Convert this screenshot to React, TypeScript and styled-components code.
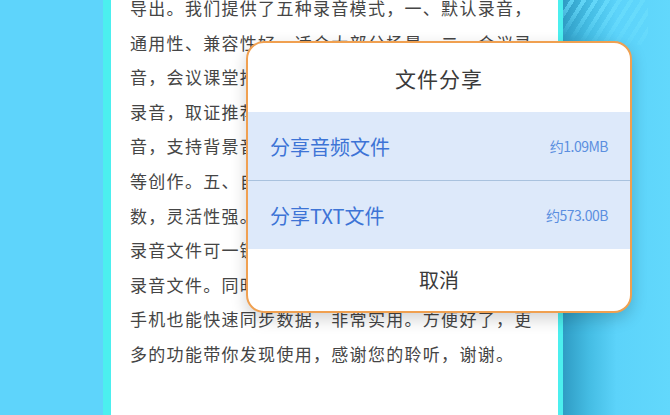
import React, { FC } from 'react';
import styled, { createGlobalStyle } from 'styled-components';

const GlobalStyle = createGlobalStyle`
  html, body {
    margin: 0;
    padding: 0;
    width: 670px;
    height: 415px;
    overflow: hidden;
    font-family: "Noto Sans CJK SC", "Liberation Sans", sans-serif;
  }
`;

const lines = [
    '导出。我们提供了五种录音模式，一、默认录音，',
    '通用性、兼容性好，适合大部分场景。二、会议录',
    '音，会议课堂推荐使用，清晰收录。三、采访',
    '录音，取证推荐使用，还原真实声音。四、音乐录',
    '音，支持背景音乐录制，适合翻唱、配音',
    '等创作。五、自定义录音，自由设置各项参',
    '数，灵活性强。录音完成后可转换为文字，',
    '录音文件可一键分享给好友，也可导出',
    '录音文件。同时支持云端备份，换了新',
    '手机也能快速同步数据，非常实用。方便好了，更',
    '多的功能带你发现使用，感谢您的聆听，谢谢。',
];

interface ShareRow {
    label: string,
    size: string,
}

const rows: ShareRow[] = [
    { label: '分享音频文件', size: '约1.09MB' },
    { label: '分享TXT文件', size: '约573.00B' },
];

const App: FC = () => {
    return (
        <Screen>
            <GlobalStyle />
            <LeftPanel />
            <Strip width={8} />
            <Page>
                <Article>
                    {lines.map((line, i) => (
                        <Line key={i}>{line}</Line>
                    ))}
                </Article>
            </Page>
            <Strip width={5} />
            <RightPanel>
                <Stripes />
            </RightPanel>

            <Dialog>
                <Title>文件分享</Title>
                <Options>
                    {rows.map((row, i) => (
                        <Option key={row.label} divider={i > 0}>
                            <OptionLabel>{row.label}</OptionLabel>
                            <OptionSize>{row.size}</OptionSize>
                        </Option>
                    ))}
                </Options>
                <Cancel>取消</Cancel>
            </Dialog>
        </Screen>
    )
}
export default App;

const Screen = styled.div`
    position: relative;
    display: flex;
    width: 670px;
    height: 415px;
    overflow: hidden;
    background: #5fd5fb;
`;

const LeftPanel = styled.div`
    width: 103px;
    flex-shrink: 0;
    background: #5ed4fb;
`;

const Strip = styled.div<{ width: number }>`
    width: ${p => p.width}px;
    flex-shrink: 0;
    background: #4cefef;
`;

const Page = styled.div`
    width: 447px;
    flex-shrink: 0;
    background: #ffffff;
    overflow: hidden;
`;

const Article = styled.div`
    margin-top: -9px;
    padding-left: 19px;
`;

const Line = styled.p`
    margin: 0;
    height: 34.6px;
    line-height: 34.6px;
    font-size: 17px;
    letter-spacing: 1.3px;
    color: #454545;
    white-space: nowrap;
`;

const RightPanel = styled.div`
    position: relative;
    flex: 1;
    background: linear-gradient(90deg, #2f9cc4 0%, #45bde4 25%, #5cd3fa 50%, #62d8fc 100%);
`;

const Stripes = styled.div`
    position: absolute;
    left: 0;
    top: 0;
    width: 85px;
    height: 45px;
    background: repeating-linear-gradient(
        -58deg,
        rgba(120, 220, 255, 0) 0px,
        rgba(120, 220, 255, 0) 6px,
        rgba(105, 220, 252, 0.8) 6px,
        rgba(105, 220, 252, 0.8) 10px
    );
    -webkit-mask-image: linear-gradient(200deg, #000 35%, transparent 90%);
    mask-image: linear-gradient(200deg, #000 35%, transparent 90%);
`;

const Dialog = styled.div`
    position: absolute;
    left: 246px;
    top: 41px;
    width: 386px;
    height: 272px;
    box-sizing: border-box;
    border: 2px solid #f0a050;
    border-radius: 18px;
    background: #ffffff;
    overflow: hidden;
    display: flex;
    flex-direction: column;
    box-shadow: 0 6px 16px rgba(0, 0, 0, 0.18);
`;

const Title = styled.div`
    height: 69px;
    display: flex;
    align-items: center;
    justify-content: center;
    font-size: 21px;
    color: #3a3a3a;
    letter-spacing: 1px;
`;

const Options = styled.div`
    display: flex;
    flex-direction: column;
    background: #dde9fa;
`;

const Option = styled.div<{ divider: boolean }>`
    height: 68px;
    display: flex;
    align-items: center;
    justify-content: space-between;
    padding: 0 22px 0 22px;
    border-top: ${p => (p.divider ? '1px solid #a9c2de' : 'none')};
`;

const OptionLabel = styled.span`
    font-size: 20px;
    color: #3d74d6;
`;

const OptionSize = styled.span`
    font-size: 14px;
    color: #5b8fe0;
    letter-spacing: -0.5px;
`;

const Cancel = styled.div`
    flex: 1;
    display: flex;
    align-items: center;
    justify-content: center;
    font-size: 20px;
    color: #3a3a3a;
    padding-bottom: 2px;
`;
